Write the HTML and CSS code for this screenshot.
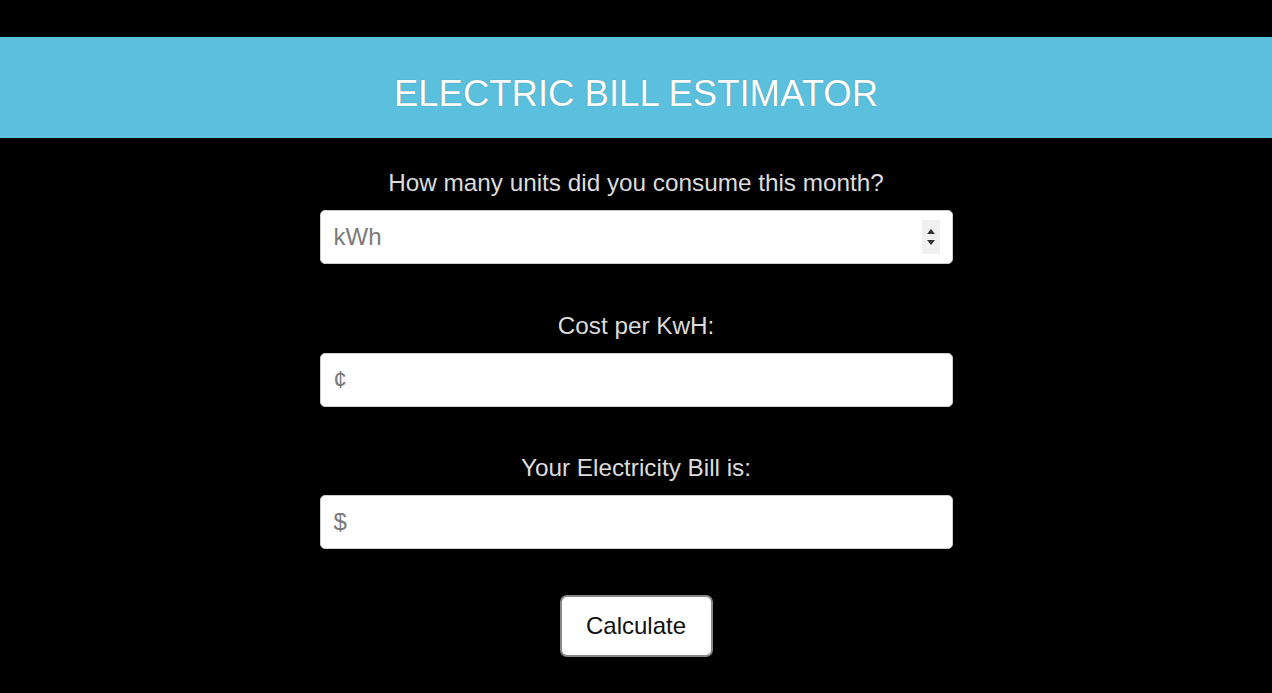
FILE: index.html
```html
<!DOCTYPE html>
<html>
<head>
<meta charset="utf-8">
<link rel="stylesheet" href="styles.css">
</head>
<body>
<header class="banner">
  <h1 class="title">ELECTRIC BILL ESTIMATOR</h1>
</header>
<main class="form">
  <div class="group">
    <label class="label" for="units">How many units did you consume this month?</label>
    <div class="field">
      <input id="units" class="input" type="text" placeholder="kWh">
      <span class="spinner"><span class="up"></span><span class="down"></span></span>
    </div>
  </div>
  <div class="group">
    <label class="label" for="cost">Cost per KwH:</label>
    <div class="field">
      <input id="cost" class="input" type="text" placeholder="¢">
    </div>
  </div>
  <div class="group">
    <label class="label" for="bill">Your Electricity Bill is:</label>
    <div class="field">
      <input id="bill" class="input" type="text" placeholder="$">
    </div>
  </div>
  <button class="btn" type="button">Calculate</button>
</main>
</body>
</html>
```
FILE: styles.css
```css
html, body {
  margin: 0;
  padding: 0;
  background: #000;
  font-family: "Liberation Sans", Arial, sans-serif;
  height: 100%;
  overflow: hidden;
}
.banner {
  margin-top: 37px;
  height: 101px;
  box-sizing: border-box;
  padding-top: 12px;
  background: #5bc0de;
  display: flex;
  align-items: center;
  justify-content: center;
}
.title {
  margin: 0;
  color: #fff;
  font-weight: normal;
  font-size: 36.5px;
  text-shadow: 0 0 1px rgba(0,0,0,0.4);
}
.form {
  width: 633px;
  margin: 0 auto;
  display: flex;
  flex-direction: column;
  align-items: center;
  padding-top: 31px;
}
.group {
  width: 100%;
  display: flex;
  flex-direction: column;
  align-items: center;
  margin-bottom: 47.5px;
}
.group:last-of-type {
  margin-bottom: 46px;
}
.label {
  color: #dcdcdc;
  font-size: 24.3px;
  line-height: 28px;
  margin-bottom: 13px;
}
.field {
  position: relative;
  width: 100%;
}
.input {
  box-sizing: border-box;
  width: 100%;
  height: 54px;
  border: 1px solid #ccc;
  border-radius: 5px;
  background: #fff;
  padding: 0 13px;
  font-family: "Liberation Sans", Arial, sans-serif;
  font-size: 24px;
  color: #555;
  outline: none;
}
.input::placeholder {
  color: #7a7a7a;
}
.spinner {
  position: absolute;
  right: 13px;
  top: 10px;
  width: 18px;
  height: 34px;
  background: #f0f0f0;
  display: flex;
  flex-direction: column;
  align-items: center;
  justify-content: center;
  gap: 6px;
}
.up {
  width: 0; height: 0;
  border-left: 4px solid transparent;
  border-right: 4px solid transparent;
  border-bottom: 5px solid #333;
}
.down {
  width: 0; height: 0;
  border-left: 4px solid transparent;
  border-right: 4px solid transparent;
  border-top: 5px solid #333;
}
.btn {
  width: 153px;
  height: 62px;
  background: #fff;
  border: 2px solid #888;
  border-radius: 7px;
  font-family: "Liberation Sans", Arial, sans-serif;
  font-size: 24px;
  color: #111;
}
```
